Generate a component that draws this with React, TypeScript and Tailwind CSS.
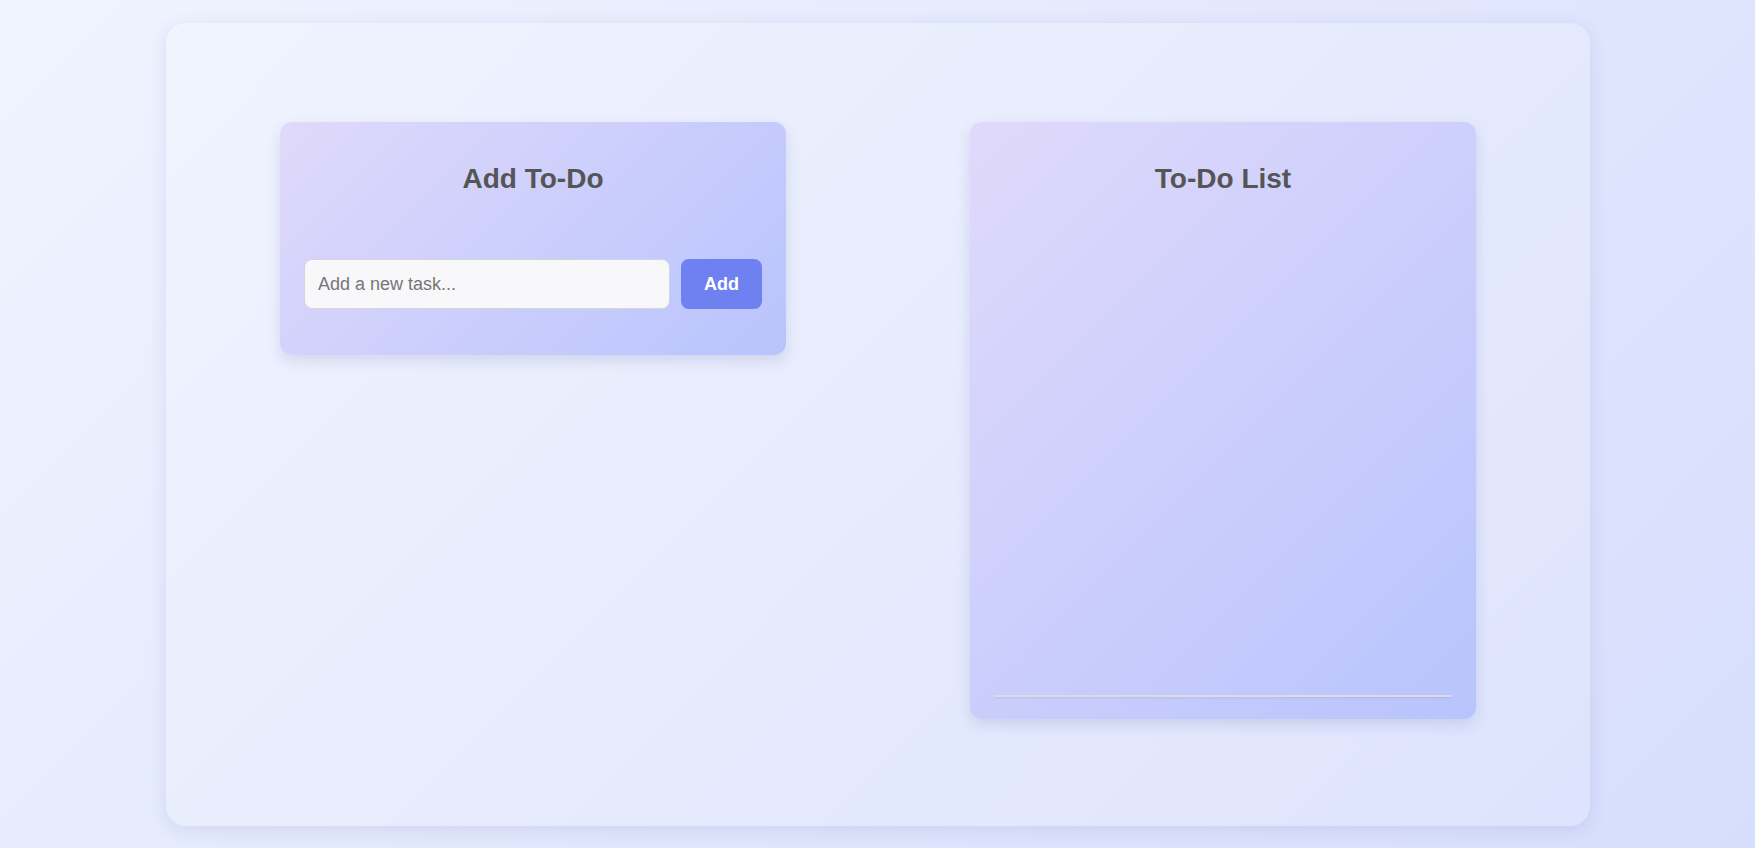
export default function App() {
  return (
    <div
      className="w-full h-[848px] overflow-hidden bg-[linear-gradient(135deg,#f0f4ff_0%,#e3e8fd_50%,#d7defd_100%)] pt-[23px] px-[166px]"
      style={{ fontFamily: '"Liberation Sans", Arial, sans-serif' }}
    >
      <div className="w-[1424px] h-[803px] rounded-[20px] bg-white/15 shadow-[0_4px_18px_rgba(60,70,140,0.12)] pt-[99px] flex justify-center items-start gap-[184px]">
        <div className="w-[506px] rounded-xl bg-[linear-gradient(135deg,#e0d9fb_0%,#b8c4fd_100%)] shadow-[0_6px_14px_rgba(60,70,140,0.14)] px-6 pt-[41px] pb-[46px]">
          <h2 className="text-center text-[28px] leading-[32px] font-bold text-[#555555]">Add To-Do</h2>
          <div className="mt-[64px] flex gap-[11px]">
            <input
              type="text"
              placeholder="Add a new task..."
              className="w-[366px] h-[50px] rounded-lg border border-[#d4d4dc] bg-[#f8f8fa] px-[13px] text-[18px] text-[#333] placeholder:text-[#767676] outline-none"
              style={{ fontFamily: '"Liberation Sans", Arial, sans-serif' }}
            />
            <button className="w-[81px] h-[50px] rounded-lg bg-[#6f80f1] text-white text-[18px] font-bold">
              Add
            </button>
          </div>
        </div>
        <div className="w-[506px] h-[597px] rounded-xl bg-[linear-gradient(135deg,#e0d9fb_0%,#b8c4fd_100%)] shadow-[0_6px_14px_rgba(60,70,140,0.14)] px-6 pt-[41px] pb-[22px] flex flex-col">
          <h2 className="text-center text-[28px] leading-[32px] font-bold text-[#555555]">To-Do List</h2>
          <div className="flex-1" />
          <div className="h-[2px] bg-[#dcdce4] shadow-[0_1px_2px_rgba(0,0,0,0.08)]" />
        </div>
      </div>
    </div>
  );
}
